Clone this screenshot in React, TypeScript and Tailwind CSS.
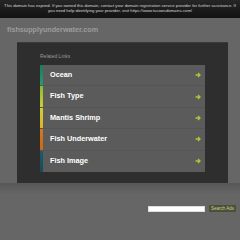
import React from "react";

const rows = [
  { label: "Ocean", bar: "bg-[linear-gradient(#1a7a60,#2a9a70)]" },
  { label: "Fish Type", bar: "bg-[linear-gradient(#8ab83a,#c8d030)]" },
  { label: "Mantis Shrimp", bar: "bg-[linear-gradient(#d0d030,#e0b030)]" },
  { label: "Fish Underwater", bar: "bg-[linear-gradient(#d07a20,#c86818)]" },
  { label: "Fish Image", bar: "bg-[linear-gradient(#1e5a68,#184a58)]" },
];

function Arrow() {
  return (
    <svg width="6" height="6" viewBox="0 0 6 6" className="shrink-0">
      <path d="M0.5 3 H5 M3 1 L5 3 L3 5" stroke="#a8c83a" strokeWidth="1.3" fill="none" />
    </svg>
  );
}

export default function App() {
  return (
    <div className="w-[240px] h-[240px] overflow-hidden bg-[#666666] font-['Liberation_Sans',Arial,sans-serif]">
      <div className="h-[18px] bg-[linear-gradient(#262626,#121212)] pt-[3px] px-[1px] text-center text-[4.2px] leading-[5.3px] text-[#d8d8d8]">
        This domain has expired. If you owned this domain, contact your domain registration service provider for further assistance. If you need help identifying your provider, visit https://www.tucowsdomains.com/
      </div>
      <div className="h-[24px] pl-[7px] pt-[7px] text-[7.2px] leading-[9px] font-bold text-[#9c9c9c]">
        fishsupplyunderwater.com
      </div>
      <div className="ml-[17px] w-[211px] h-[141px] bg-[#2e2e2e] border-t border-[#3a3a3a] px-[23px] pt-[10px]">
        <div className="text-[5px] leading-[6px] text-[#9a9a9a] h-[12px]">Related Links</div>
        <div className="bg-[#5b5b5b] flex flex-col">
          {rows.map((r, i) => (
            <div
              key={r.label}
              className={"flex items-center h-[21.4px] " + (i < rows.length - 1 ? "border-b border-[#555555]" : "")}
            >
              <div className={"w-[3px] self-stretch " + r.bar} />
              <div className="flex-1 pl-[7px] text-[7.3px] font-bold text-white">{r.label}</div>
              <div className="pr-[4px]">
                <Arrow />
              </div>
            </div>
          ))}
        </div>
      </div>
      <div className="h-[12px] bg-[linear-gradient(#575757,#666666)]" />
      <div className="flex justify-end items-center pr-[4px] pt-[10px] gap-[4px]">
        <div className="w-[57px] h-[6px] bg-white border border-[#dddddd]" />
        <div className="h-[7px] px-[2px] bg-[#4c5230] text-[4.5px] leading-[7px] text-[#c8c8b0]">Search Ads</div>
      </div>
    </div>
  );
}
